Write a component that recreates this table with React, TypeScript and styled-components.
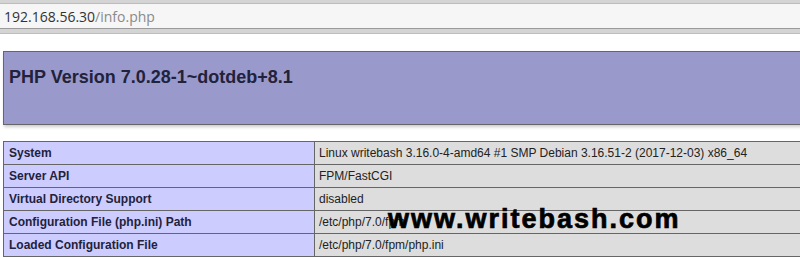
import React from "react";
import { styled, createGlobalStyle } from "styled-components";

const GlobalStyle = createGlobalStyle`
  html, body {
    margin: 0;
    padding: 0;
    background: #ffffff;
    overflow: hidden;
  }
  body {
    font-family: "Liberation Sans", Arial, sans-serif;
    color: #222222;
  }
`;

const BrowserBar = styled.div`
  background: #d4d4d4;
  padding: 3px 0 4px;
  border-bottom: 1px solid #bdbdbd;
`;

const UrlField = styled.div`
  height: 26px;
  box-sizing: border-box;
  background: #f6f6f6;
  border-top: 1px solid #bcbcbc;
  border-bottom: 1px solid #9a9a9a;
  padding-left: 4px;
  display: flex;
  align-items: center;
  font-family: "Open Sans", "Noto Sans", sans-serif;
  font-size: 14px;
`;

const Host = styled.span`
  color: #333333;
`;

const Path = styled.span`
  color: #8a8a8a;
`;

const Page = styled.div`
  padding: 17px 0 0 3px;
  width: 934px;
`;

const Header = styled.div`
  height: 74px;
  box-sizing: border-box;
  background: #9999cc;
  border: 1px solid #666666;
  box-shadow: 1px 2px 3px #cccccc;
  padding: 14px 5px 0;
`;

const Title = styled.h1`
  margin: 0;
  font-size: 18px;
  line-height: 22px;
  font-weight: 700;
  color: #22223a;
`;

const TableWrap = styled.div`
  position: relative;
  margin-top: 16px;
`;

const Table = styled.div`
  display: grid;
  grid-template-columns: 311px 1fr;
  border-top: 1px solid #666666;
  border-left: 1px solid #666666;
`;

const Cell = styled.div<{ $label?: boolean }>`
  height: 23px;
  box-sizing: border-box;
  border-right: 1px solid #666666;
  border-bottom: 1px solid #666666;
  padding-left: ${({ $label }) => ($label ? "5px" : "4px")};
  font-size: 12px;
  line-height: 22px;
  white-space: nowrap;
  overflow: hidden;
  background: ${({ $label }) => ($label ? "#ccccff" : "#dddddd")};
  font-weight: ${({ $label }) => ($label ? 700 : 400)};
  color: ${({ $label }) => ($label ? "#22223a" : "#222222")};
`;

const Watermark = styled.div`
  position: absolute;
  left: 385px;
  top: 65px;
  font-size: 27px;
  line-height: 27px;
  font-weight: 900;
  letter-spacing: 2px;
  color: #000000;
  -webkit-text-stroke: 0.7px #000000;
  white-space: nowrap;
`;

const rows: [string, string][] = [
  ["System", "Linux writebash 3.16.0-4-amd64 #1 SMP Debian 3.16.51-2 (2017-12-03) x86_64"],
  ["Server API", "FPM/FastCGI"],
  ["Virtual Directory Support", "disabled"],
  ["Configuration File (php.ini) Path", "/etc/php/7.0/fpm"],
  ["Loaded Configuration File", "/etc/php/7.0/fpm/php.ini"],
];

const App: React.FC = () => {
  return (
    <>
      <GlobalStyle />
      <BrowserBar>
        <UrlField>
          <Host>192.168.56.30</Host>
          <Path>/info.php</Path>
        </UrlField>
      </BrowserBar>
      <Page>
        <Header>
          <Title>PHP Version 7.0.28-1~dotdeb+8.1</Title>
        </Header>
        <TableWrap>
          <Table>
            {rows.map(([label, value]) => (
              <React.Fragment key={label}>
                <Cell $label>{label}</Cell>
                <Cell>{value}</Cell>
              </React.Fragment>
            ))}
          </Table>
          <Watermark>www.writebash.com</Watermark>
        </TableWrap>
      </Page>
    </>
  );
};

export default App;
